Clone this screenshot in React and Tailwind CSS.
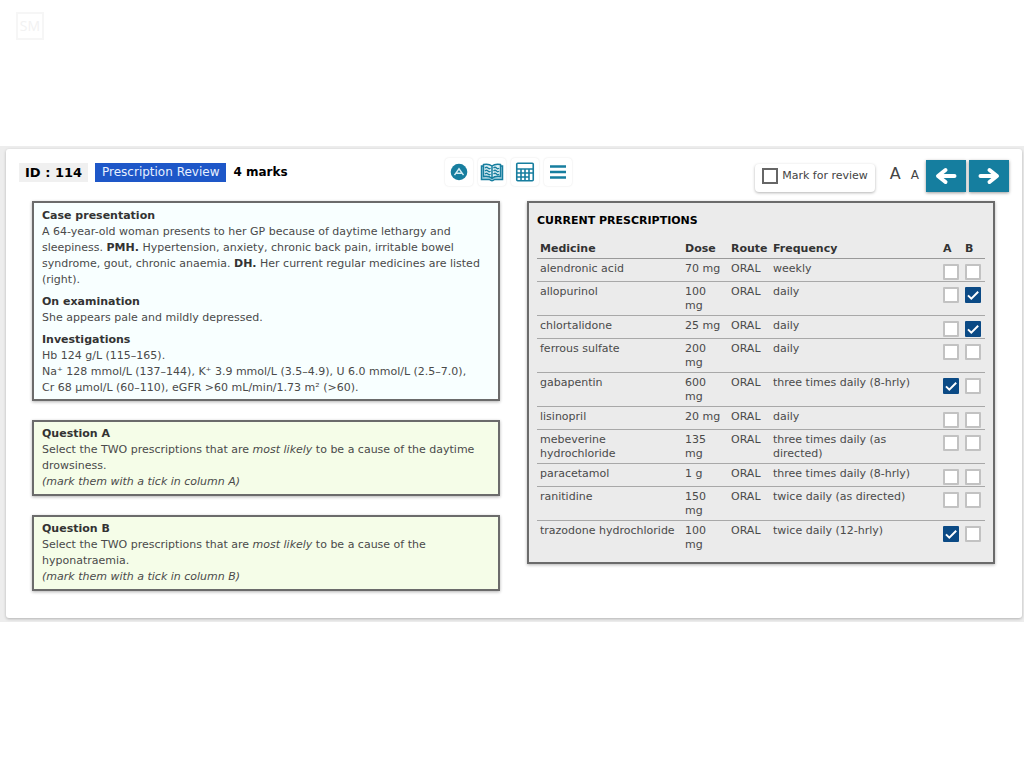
import { useState } from 'react'

const medicines = [
  { name: 'alendronic acid', dose: '70 mg', freq: 'weekly' },
  { name: 'allopurinol', dose: '100 mg', freq: 'daily' },
  { name: 'chlortalidone', dose: '25 mg', freq: 'daily' },
  { name: 'ferrous sulfate', dose: '200 mg', freq: 'daily' },
  { name: 'gabapentin', dose: '600 mg', freq: 'three times daily (8-hrly)' },
  { name: 'lisinopril', dose: '20 mg', freq: 'daily' },
  { name: 'mebeverine hydrochloride', dose: '135 mg', freq: 'three times daily (as directed)' },
  { name: 'paracetamol', dose: '1 g', freq: 'three times daily (8-hrly)' },
  { name: 'ranitidine', dose: '150 mg', freq: 'twice daily (as directed)' },
  { name: 'trazodone hydrochloride', dose: '100 mg', freq: 'twice daily (12-hrly)' },
]

function Tick({ label, checked, onChange }) {
  return (
    <span className="relative block size-4">
      <input
        type="checkbox"
        aria-label={label}
        checked={checked}
        onChange={onChange}
        className="block size-4 appearance-none rounded-[1px] border-2 border-[#c2c2c2] bg-white checked:border-[#0b4a85] checked:bg-[#0b4a85]"
      />
      {checked && (
        <svg viewBox="0 0 16 16" className="pointer-events-none absolute inset-0 size-4" fill="none" stroke="white" strokeWidth="2">
          <path d="M3 8.4 6.3 11.6 13.2 4.8" />
        </svg>
      )}
    </span>
  )
}

function ToolButton({ label, children }) {
  return (
    <button aria-label={label} className="flex h-7 w-7 items-center justify-center rounded-sm bg-white text-[#177e9f] shadow-[0_0_2px_rgba(0,0,0,0.12)]">
      {children}
    </button>
  )
}

function ArrowButton({ label, onClick, flip }) {
  return (
    <button aria-label={label} onClick={onClick} className="flex h-8 w-10 items-center justify-center bg-[#157e9f] shadow-[0_1px_3px_rgba(0,0,0,0.4)]">
      <svg viewBox="0 0 24 20" className={flip ? 'h-5 w-6 rotate-180' : 'h-5 w-6'} fill="none" stroke="white" strokeWidth="4" strokeLinecap="round" strokeLinejoin="round">
        <path d="M11.5 4 4 10l7.500 6M5 10h15.500" />
      </svg>
    </button>
  )
}

function Panel({ className, children }) {
  return (
    <section className={`border-2 border-[#6b6b6b] px-2 leading-4 shadow-[0_1px_3px_rgba(0,0,0,0.3)] ${className}`}>
      {children}
    </section>
  )
}

function Question({ letter, topic }) {
  return (
    <Panel className="bg-[#f5fde8] py-1">
      <h2 className="font-bold text-[#333]">Question {letter}</h2>
      <p>
        Select the TWO prescriptions that are <em>most likely</em> to be a cause of the {topic}.
      </p>
      <p className="italic">(mark them with a tick in column {letter})</p>
    </Panel>
  )
}

export default function App() {
  const [answers, setAnswers] = useState({ A: [4, 9], B: [1, 2] })
  const [review, setReview] = useState(false)

  const toggle = (col, i) => {
    const list = answers[col]
    setAnswers({ ...answers, [col]: list.includes(i) ? list.filter((n) => n !== i) : [...list, i] })
  }

  return (
    <div className="min-h-screen bg-white font-['DejaVu_Sans',sans-serif] text-[11px] text-[#4a4a4a]">
      <header className="h-[146px] px-4 pt-3">
        <div className="flex h-7 w-7 items-center justify-center border-2 border-[#f6f6f6] font-['Open_Sans',sans-serif] text-sm text-[#f2f2f2]">SM</div>
      </header>

      <main className="bg-[#ededed] pt-[3px] pr-[2px] pb-1 pl-[6px]">
        <div className="rounded-[3px] bg-white pt-[9px] pb-[27px] shadow-[0_1px_3px_rgba(0,0,0,0.25)]">
          <div className="flex items-start px-[13px]">
            <div className="mt-[5px] flex flex-1 items-center text-xs leading-[19px] text-black">
              <span className="bg-[#f0f0f0] px-[6px] text-[13px] leading-[19px] font-bold">ID : 114</span>
              <span className="ml-[7px] bg-[#1e57c8] px-[7px] text-[#e8f0ff]">Prescription Review</span>
              <span className="ml-[7px] font-bold">4 marks</span>
            </div>

            <div className="mr-3 flex gap-[5px]">
              <ToolButton label="Accessibility">
                <svg viewBox="0 0 18 18" className="size-[18px]">
                  <circle cx="9" cy="9" r="8.300" fill="currentColor" />
                  <path d="M4.500 12.200 9 5.800l4.500 6.400M6.500 10.200h5" fill="none" stroke="#d8eef5" strokeWidth="1.400" />
                </svg>
              </ToolButton>
              <ToolButton label="Reference book">
                <svg viewBox="0 0 24 20" className="h-5 w-6" fill="none" stroke="currentColor" strokeWidth="1.500">
                  <path d="M3.500 4H1.500V17.500H9.500Q12 20 14.500 17.500H22.500V4H20.500" fill="#a9d3e0" />
                  <path d="M12 4C9.500 2 6 2 3.500 2.500V14.500C7 14 10 14.500 12 16.500 14 14.500 17 14 20.500 14.500V2.500C18 2 14.500 2 12 4ZM12 4V16.500" fill="#dff0f5" />
                  <path d="M5 6q1.500-1.500 3 0t2.500 0M5 9q1.500-1.500 3 0t2.500 0M5 12q1.500-1.500 3 0t2.500 0M13.500 6q1.500-1.500 3 0t2.500 0M13.500 9q1.500-1.500 3 0t2.500 0M13.500 12q1.500-1.500 3 0t2.500 0" strokeWidth="1.300" />
                </svg>
              </ToolButton>
              <ToolButton label="Calculator">
                <svg viewBox="0 0 20 20" className="size-5" fill="none" stroke="currentColor" strokeWidth="1.600">
                  <rect x="1.750" y="1.250" width="16.500" height="17.500" rx="1" />
                  <path d="M2 7h16M2 11h16M2 15h12M6 7v12M10 7v12M14 7v12" />
                </svg>
              </ToolButton>
              <ToolButton label="Menu">
                <svg viewBox="0 0 18 16" className="h-4 w-[18px]" stroke="currentColor" strokeWidth="2.600">
                  <path d="M1 2.500h16M1 8h16M1 13.500h16" />
                </svg>
              </ToolButton>
            </div>

            <div className="mt-[2px] flex flex-1 items-start justify-end text-[#444]">
              <label className="mt-1 flex h-7 items-center gap-1 rounded-sm px-[7px] pb-1 shadow-[0_1px_3px_rgba(0,0,0,0.3)]">
                <input
                  type="checkbox"
                  checked={review}
                  onChange={() => setReview(!review)}
                  className="size-4 appearance-none border-2 border-[#666] bg-white checked:bg-[#0b4a85]"
                />
                Mark for review
              </label>
              <button aria-label="Larger text" className="ml-[15px] text-base leading-7">A</button>
              <button aria-label="Smaller text" className="ml-[10px] text-xs leading-[30px]">A</button>
              <div className="ml-[7px] flex gap-[3px]">
                <ArrowButton label="Previous question" />
                <ArrowButton label="Next question" flip />
              </div>
            </div>
          </div>

          <div className="mt-[9px] grid grid-cols-2 items-start gap-[27px] pr-[27px] pl-[26px]">
            <div className="flex flex-col gap-[19px]">
              <Panel className="bg-[#f8ffff] pt-[5px] pb-[3px]">
                <div className="flex flex-col gap-[6px]">
                  <div>
                    <h2 className="font-bold text-[#333]">Case presentation</h2>
                    <p>
                      A 64-year-old woman presents to her GP because of daytime lethargy and sleepiness. <b className="text-[#333]">PMH.</b>{' '}
                      Hypertension, anxiety, chronic back pain, irritable bowel syndrome, gout, chronic anaemia.{' '}
                      <b className="text-[#333]">DH.</b> Her current regular medicines are listed (right).
                    </p>
                  </div>
                  <div>
                    <h2 className="font-bold text-[#333]">On examination</h2>
                    <p>She appears pale and mildly depressed.</p>
                  </div>
                  <div>
                    <h2 className="font-bold text-[#333]">Investigations</h2>
                    <p>Hb 124 g/L (115–165).</p>
                    <p>Na⁺ 128 mmol/L (137–144), K⁺ 3.9 mmol/L (3.5–4.9), U 6.0 mmol/L (2.5–7.0),</p>
                    <p>Cr 68 µmol/L (60–110), eGFR &gt;60 mL/min/1.73 m² (&gt;60).</p>
                  </div>
                </div>
              </Panel>
              <Question letter="A" topic="daytime drowsiness" />
              <Question letter="B" topic="hyponatraemia" />
            </div>

            <section className="border-2 border-[#6b6b6b] bg-[#ebebeb] px-2 pt-[10px] pb-2 shadow-[0_1px_3px_rgba(0,0,0,0.3)]">
              <h2 className="leading-4 font-bold text-black">CURRENT PRESCRIPTIONS</h2>
              <table className="mt-[13px] w-full table-fixed leading-[14px]">
                <thead>
                  <tr className="border-b border-[#999] text-left text-[#333]">
                    <th className="w-[145px] px-[3px] pb-[2px]">Medicine</th>
                    <th className="w-[46px] px-[3px] pb-[2px]">Dose</th>
                    <th className="w-[42px] px-[3px] pb-[2px]">Route</th>
                    <th className="px-[3px] pb-[2px]">Frequency</th>
                    <th className="w-[22px] px-[2px] pb-[2px]">A</th>
                    <th className="w-[22px] px-[2px] pb-[2px]">B</th>
                  </tr>
                </thead>
                <tbody>
                  {medicines.map((m, i) => (
                    <tr key={m.name} className="border-b border-[#a8a8a8] align-top last:border-b-0">
                      <td className="px-[3px] pt-[3px] pb-[2px]">{m.name}</td>
                      <td className="px-[3px] pt-[3px] pb-[2px]">{m.dose}</td>
                      <td className="px-[3px] pt-[3px] pb-[2px]">ORAL</td>
                      <td className="px-[3px] pt-[3px] pb-[2px]">{m.freq}</td>
                      {['A', 'B'].map((col) => (
                        <td key={col} className="px-[2px] pt-[5px] pb-px">
                          <Tick label={`${m.name}, column ${col}`} checked={answers[col].includes(i)} onChange={() => toggle(col, i)} />
                        </td>
                      ))}
                    </tr>
                  ))}
                </tbody>
              </table>
            </section>
          </div>
        </div>
      </main>
    </div>
  )
}
